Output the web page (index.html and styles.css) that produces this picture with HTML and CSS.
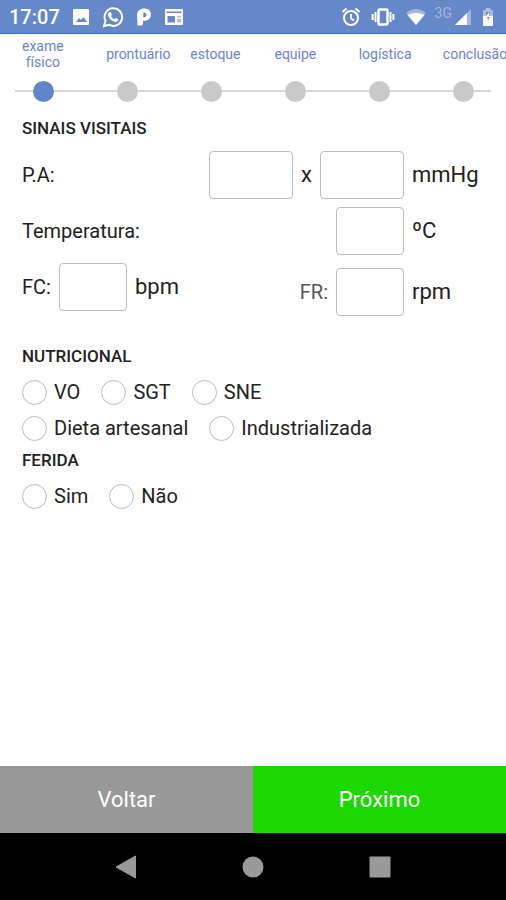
FILE: index.html
```html
<!DOCTYPE html>
<html lang="pt-BR">
<head>
<meta charset="utf-8">
<meta name="viewport" content="width=device-width, initial-scale=1">
<title>Exame físico</title>
<link rel="stylesheet" href="styles.css">
</head>
<body>
<header class="status">
  <span class="clock">17:07</span>
  <div class="status-left">
    <svg width="18" height="18" viewBox="0 0 18 18"><path fill="#fff" fill-rule="evenodd" d="M2 1h14q1 0 1 1v14q0 1-1 1H2q-1 0-1-1V2q0-1 1-1zM4 14h11l-3.500-5-2.500 3-2-2z"/></svg>
    <svg width="22" height="22" viewBox="0 0 22 22"><path d="M2 20l1.500-5A8.800 8.800 0 1 1 7 18.700z" fill="none" stroke="#fff" stroke-width="2"/><path fill="#fff" d="M7.500 6h1.400l1.100 2.700-1 1.300q1.100 2.100 3.200 3.200l1.400-1.300 2.600 1.300q0 2.600-2.700 2.700C9.500 15.500 6 11.500 6 8.500 6 7.200 6.600 6.400 7.500 6z"/></svg>
    <svg width="16" height="20" viewBox="0 0 16 20"><path fill="#fff" fill-rule="evenodd" d="M1 8.500C1 4 4 1.500 8.500 1.500c4 0 6.500 2.300 6.500 5.800 0 4-3 6.500-6.300 6.500H7v2.400q0 2.300-3 2.300H1.500zM7.300 5.500v4.700q3.200.2 3.200-2.600 0-2.300-3.200-2.100z"/></svg>
    <svg width="20" height="18" viewBox="0 0 20 18"><path fill="#fff" fill-rule="evenodd" d="M2 1h16q1 0 1 1v14q0 1-1 1H2q-1 0-1-1V2q0-1 1-1zM2.500 3.500V5h15V3.500zM3.500 8v6.500H11V8z"/><path fill="#6688c9" opacity=".55" d="M13 8h4v1.500h-4zM13 11h4v3.500h-4z"/></svg>
  </div>
  <div class="status-right">
    <svg width="20" height="20" viewBox="0 0 20 20" fill="none" stroke="#fff" stroke-width="2"><circle cx="10" cy="11" r="7"/><path d="M10 7v4.500l3 1.800M1.500 5L5.500 1.500M18.500 5l-4-3.500"/></svg>
    <svg width="24" height="18" viewBox="0 0 24 18" fill="none" stroke="#fff" stroke-width="2"><rect x="7.500" y="1.500" width="9" height="15" rx="1" stroke-width="2.500"/><path d="M4.500 4v10M19.500 4v10M1.600 6v6M22.400 6v6"/></svg>
    <svg width="22" height="18" viewBox="0 0 22 18"><path fill="#fff" opacity=".4" d="M1 5Q11-3 21 5L11 17z"/><path fill="#fff" d="M2.500 7Q11 3 19.500 7L11 17z"/></svg>
    <span class="network">3G</span>
    <svg width="18" height="18" viewBox="0 0 18 18"><path fill="#fff" opacity=".4" d="M17 1v16H1z"/><path fill="#fff" d="M13 5v12H1z"/></svg>
    <svg width="12" height="20" viewBox="0 0 12 20"><path fill="#fff" opacity=".45" fill-rule="evenodd" d="M1 4q0-1 1-1h1.500V1h5v2H10q1 0 1 1v6H1zM4 5v5h4V5z"/><path fill="#fff" d="M7.200 5v4H11v9q0 1-1 1H2q-1 0-1-1V9h3z"/><path fill="#6688c9" d="M6.500 14V11.500L8 10H5z"/></svg>
  </div>
</header>

<nav class="stepper" aria-label="Etapas">
  <ol class="steps">
    <li class="step current" aria-current="step"><span class="step-label">exame<br>físico</span><span class="dot"></span></li>
    <li class="step"><span class="step-label">prontuário</span><span class="dot"></span></li>
    <li class="step"><span class="step-label">estoque</span><span class="dot"></span></li>
    <li class="step"><span class="step-label">equipe</span><span class="dot"></span></li>
    <li class="step"><span class="step-label">logística</span><span class="dot"></span></li>
    <li class="step"><span class="step-label">conclusão</span><span class="dot"></span></li>
  </ol>
</nav>

<form class="form">
  <section class="vitals">
    <h2>SINAIS VISITAIS</h2>
    <div class="row">
      <label for="pa-max">P.A:</label>
      <div class="measure">
        <input class="box wide" id="pa-max" type="text" inputmode="numeric">
        <label class="unit" for="pa-min">x</label>
        <input class="box wide" id="pa-min" type="text" inputmode="numeric">
        <span class="unit trailing">mmHg</span>
      </div>
    </div>
    <div class="row">
      <label for="temp">Temperatura:</label>
      <div class="measure">
        <input class="box" id="temp" type="text" inputmode="decimal">
        <span class="unit trailing">ºC</span>
      </div>
    </div>
    <div class="row split">
      <div class="measure">
        <label for="fc">FC:</label>
        <input class="box" id="fc" type="text" inputmode="numeric">
        <span class="unit">bpm</span>
      </div>
      <div class="measure lowered">
        <label class="soft" for="fr">FR:</label>
        <input class="box" id="fr" type="text" inputmode="numeric">
        <span class="unit trailing">rpm</span>
      </div>
    </div>
  </section>

  <section class="nutrition">
    <h2>NUTRICIONAL</h2>
    <div class="options">
      <label class="option"><input type="radio" name="dieta">VO</label>
      <label class="option"><input type="radio" name="dieta">SGT</label>
      <label class="option"><input type="radio" name="dieta">SNE</label>
    </div>
    <div class="options">
      <label class="option"><input type="radio" name="tipo">Dieta artesanal</label>
      <label class="option"><input type="radio" name="tipo">Industrializada</label>
    </div>
  </section>

  <section class="wound">
    <h2>FERIDA</h2>
    <div class="options">
      <label class="option"><input type="radio" name="ferida">Sim</label>
      <label class="option"><input type="radio" name="ferida">Não</label>
    </div>
  </section>
</form>

<div class="actions">
  <button class="back" type="button">Voltar</button>
  <button class="next" type="button">Próximo</button>
</div>

<footer class="system-nav">
  <button type="button" aria-label="Voltar"><svg width="24" height="24" viewBox="0 0 24 24"><path fill="#999" stroke="#999" stroke-linejoin="round" d="M2 12L21.500 1v22z"/></svg></button>
  <button type="button" aria-label="Início"><svg width="24" height="24" viewBox="0 0 24 24"><circle cx="12" cy="12" r="10.500" fill="#999"/></svg></button>
  <button type="button" aria-label="Recentes"><svg width="24" height="24" viewBox="0 0 24 24"><rect x="1.500" y="1.500" width="21" height="21" rx="1" fill="#999"/></svg></button>
</footer>
</body>
</html>
```
FILE: styles.css
```css
* {
  box-sizing: border-box;
}

body {
  margin: 0;
  min-height: 100vh;
  display: flex;
  flex-direction: column;
  overflow-x: hidden;
  background: #fff;
  color: #222;
  font: 20px/24px Roboto, "Liberation Sans", sans-serif;
}

svg {
  display: block;
}

/* Status bar */
.status {
  display: flex;
  align-items: center;
  height: 34px;
  padding: 1px 12px 0 9px;
  background: #6688c9;
  border-bottom: 1px solid #426db8;
  color: #fff;
}

.clock {
  font-weight: 500;
}

.status-left,
.status-right {
  display: flex;
  align-items: center;
}

.status-left {
  gap: 12px;
  margin-left: 12px;
}

.status-right {
  gap: 10px;
  margin-left: auto;
}

.network {
  margin: 0 -8px 8px -2px;
  color: #a3b8df;
  font-size: 14px;
  line-height: 14px;
}

/* Stepper */
.stepper {
  overflow: hidden;
}

.steps {
  position: relative;
  display: grid;
  grid-template-columns: repeat(6, minmax(0, 1fr));
  margin: 0;
  padding: 4px 0 2px 1px;
  list-style: none;
}

.steps::before {
  content: "";
  position: absolute;
  left: 15px;
  right: 15px;
  bottom: 12px;
  height: 2px;
  background: #d8d8d8;
}

.step {
  position: relative;
  display: flex;
  flex-direction: column;
}

.step-label {
  display: flex;
  align-items: center;
  align-self: flex-start;
  height: 32px;
  margin-left: 21px;
  color: #6c86cc;
  font-size: 14px;
  line-height: 16px;
  text-align: center;
  white-space: nowrap;
}

.dot {
  align-self: center;
  width: 21px;
  height: 21px;
  margin-top: 11px;
  border-radius: 50%;
  background: #c9c9c9;
}

.current .dot {
  background: #6284ca;
}

/* Form */
.form {
  flex: 1;
  padding: 14px 22px;
}

h2 {
  margin: 0;
  font-size: 17px;
  font-weight: 500;
  line-height: 20px;
}

.vitals {
  display: flex;
  flex-direction: column;
  gap: 8px;
}

.vitals h2 {
  margin-bottom: 5px;
}

.row {
  display: flex;
  align-items: center;
  justify-content: space-between;
}

.split {
  align-items: flex-start;
}

.measure {
  display: flex;
  align-items: center;
  gap: 8px;
}

.lowered {
  padding-top: 5px;
}

.soft {
  color: #555;
}

.box {
  width: 68px;
  height: 48px;
  padding: 0 8px;
  border: 1px solid #bdbdbd;
  border-radius: 4px;
  background: #fff;
  font: inherit;
}

.wide {
  width: 84px;
}

.unit {
  font-size: 22px;
}

.trailing {
  width: 72px;
}

.nutrition {
  margin-top: 30px;
}

.options {
  display: flex;
  gap: 21px;
  height: 36px;
  align-items: center;
}

.nutrition .options:first-of-type {
  margin-top: 8px;
}

.option {
  display: flex;
  align-items: center;
  gap: 7px;
}

.option input {
  appearance: none;
  width: 25px;
  height: 25px;
  margin: 0;
  border: 1px solid #bdbdbd;
  border-radius: 50%;
}

.option input:checked {
  border: 8px solid #6284ca;
}

.wound {
  margin-top: 4px;
}

.wound .options {
  margin-top: 8px;
}

/* Actions */
.actions {
  display: grid;
  grid-template-columns: 1fr 1fr;
}

.actions button {
  height: 67px;
  padding: 0;
  border: 0;
  color: #fff;
  font: 22px/26px Roboto, "Liberation Sans", sans-serif;
}

.actions .back {
  background: #999;
}

.actions .next {
  background: #1bd800;
}

.system-nav {
  display: flex;
  align-items: center;
  justify-content: space-evenly;
  height: 67px;
  padding: 0 11px;
  background: #000;
}

.system-nav button {
  padding: 0;
  border: 0;
  background: none;
}
```
